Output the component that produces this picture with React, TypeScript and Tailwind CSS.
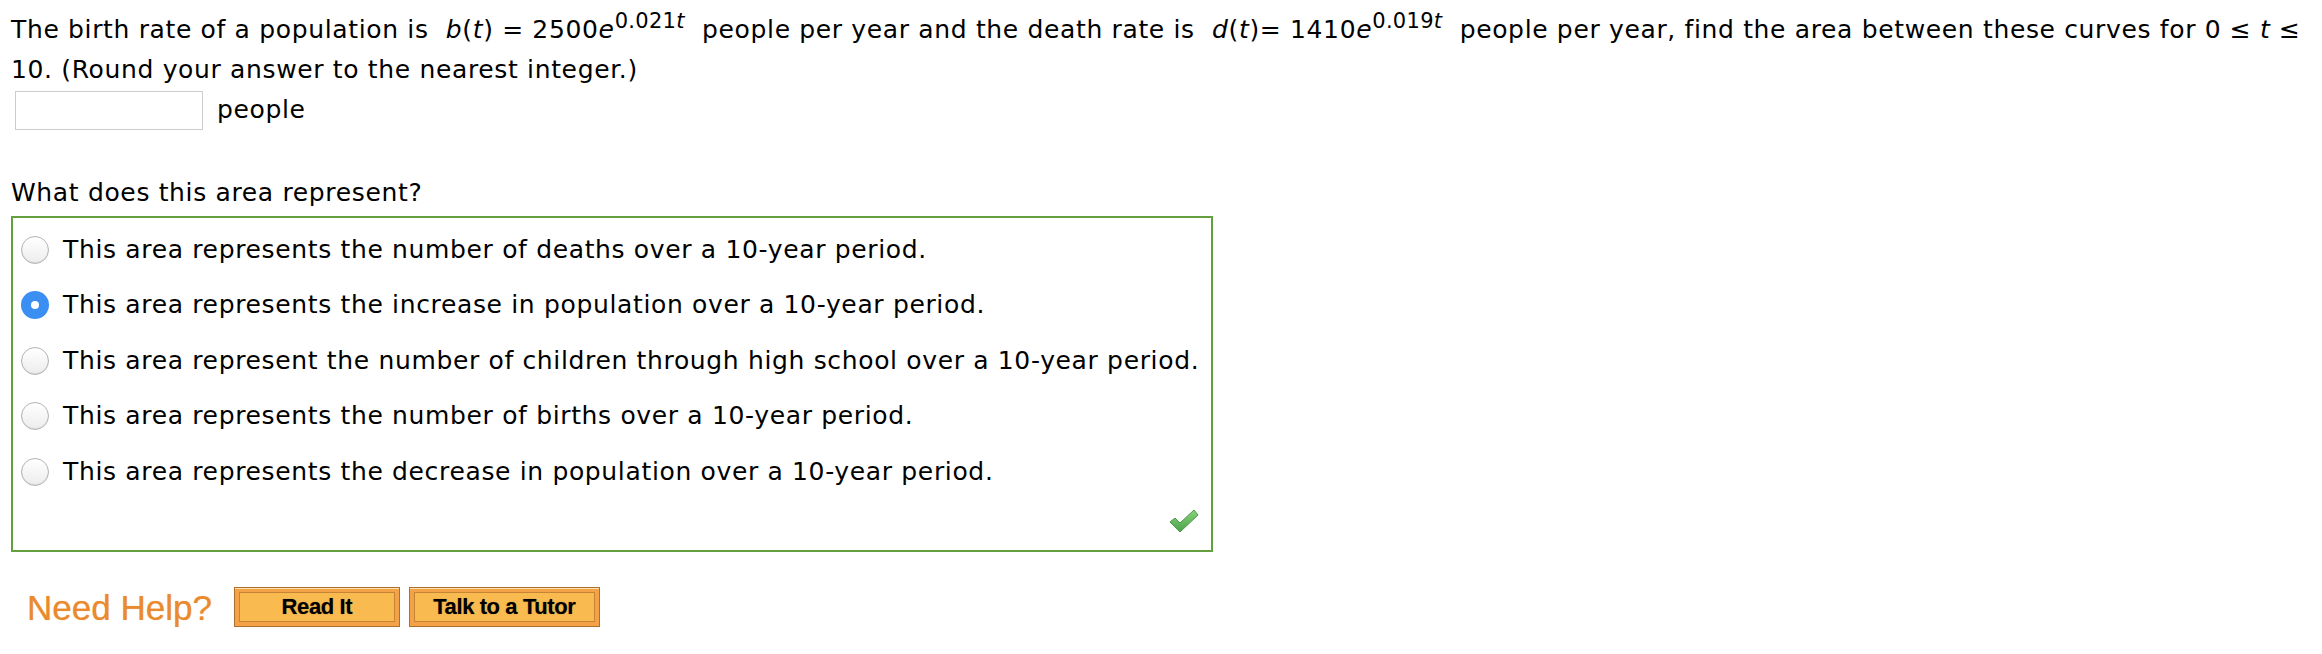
import React from 'react';

const options = [
  'This area represents the number of deaths over a 10-year period.',
  'This area represents the increase in population over a 10-year period.',
  'This area represent the number of children through high school over a 10-year period.',
  'This area represents the number of births over a 10-year period.',
  'This area represents the decrease in population over a 10-year period.',
];

const Radio: React.FC<{ checked?: boolean }> = ({ checked }) =>
  checked ? (
    <span className="flex h-[28px] w-[28px] shrink-0 items-center justify-center rounded-full bg-[#3b8ff2]">
      <span className="h-[8px] w-[8px] rounded-full bg-white" />
    </span>
  ) : (
    <span className="h-[28px] w-[28px] shrink-0 rounded-full border border-[#b3b3b3] bg-gradient-to-b from-[#ffffff] to-[#ededed] shadow-[inset_0_-1px_1px_rgba(0,0,0,0.08)]" />
  );

const Check: React.FC = () => (
  <svg width="32" height="26" viewBox="0 0 32 26">
    <defs>
      <linearGradient id="chk" x1="0" y1="0" x2="0" y2="1">
        <stop offset="0" stopColor="#8ad37c" />
        <stop offset="1" stopColor="#4aa24a" />
      </linearGradient>
    </defs>
    <path d="M2 14 L7 10 L12 15 L26 2 L30 7 L12 24 Z" fill="url(#chk)" stroke="#4c9a45" strokeWidth="1" strokeLinejoin="round" />
  </svg>
);

const HelpButton: React.FC<{ label: string; w: string }> = ({ label, w }) => (
  <div className={`${w} h-[40px] border border-[#ae6f2a] bg-[#f3a247] p-[4px] shadow-[inset_0_1px_0_#fde1b0]`}>
    <div className="flex h-full items-center justify-center border border-[#c58535] bg-[#f9bb4f] font-['Liberation_Sans',Arial,sans-serif] text-[22px] font-bold tracking-[-0.4px] text-black [text-shadow:0_0_1px_rgba(0,0,0,0.4)]">
      {label}
    </div>
  </div>
);

// preflight already gives sup: relative, top -0.5em, line-height 0
const Sup: React.FC<{ n: string }> = ({ n }) => (
  <sup className="text-[21px] tracking-[0.3px]">
    {n}
    <i>t</i>
  </sup>
);

const App: React.FC = () => {
  return (
    <div className="h-[654px] w-[2322px] bg-white pl-[11px] pt-[10px] font-['DejaVu_Sans',Verdana,sans-serif] text-[25px] leading-[40px] tracking-[0.65px] text-black">
      <div className="whitespace-nowrap">
        The birth rate of a population is&nbsp;{' '}
        <i>b</i>(<i>t</i>) = 2500<i>e</i>
        <Sup n="0.021" />
        &nbsp;{' '}
        people per year and the death rate is&nbsp;{' '}
        <i>d</i>(<i>t</i>)= 1410<i>e</i>
        <Sup n="0.019" />
        &nbsp;{' '}
        people per year, find the area between these curves for 0 ≤ <i>t</i> ≤
        <br />
        10. (Round your answer to the nearest integer.)
      </div>
      <div className="flex items-center gap-[14px] pl-[4px]">
        <div className="h-[39px] w-[188px] border border-[#cccccc] bg-white" />
        <span>people</span>
      </div>

      <div className="mt-[43px]">What does this area represent?</div>
      <div className="relative mt-[3px] h-[336px] w-[1202px] border-2 border-[#63a03e] pt-[4px]">
        {options.map((o, i) => (
          <div key={i} className="flex h-[55.5px] items-center gap-[14px] pl-[8px]">
            <Radio checked={i === 1} />
            <span>{o}</span>
          </div>
        ))}
        <div className="absolute bottom-[16px] right-[11px]">
          <Check />
        </div>
      </div>

      <div className="mt-[35px] flex items-center gap-[9px] pl-[16px]">
        <span className="mr-[13px] font-['Liberation_Sans',Arial,sans-serif] text-[35px] leading-none tracking-normal text-[#ea8a2e] [text-shadow:0_0_1px_#f3b57a]">
          Need Help?
        </span>
        <HelpButton label="Read It" w="w-[166px]" />
        <HelpButton label="Talk to a Tutor" w="w-[191px]" />
      </div>
    </div>
  );
};

export default App;
